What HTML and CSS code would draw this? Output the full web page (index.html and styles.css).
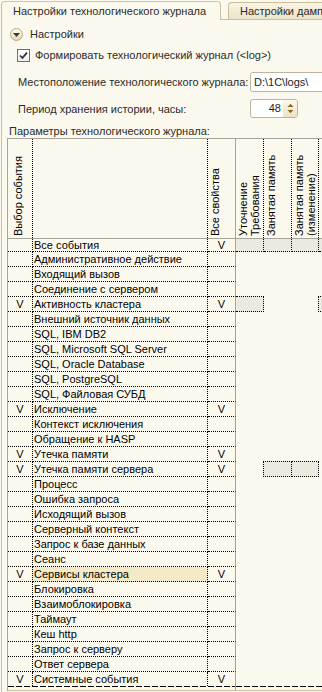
FILE: index.html
```html
<!DOCTYPE html>
<html lang="ru">
<head>
<meta charset="utf-8">
<title>Настройки технологического журнала</title>
<link rel="stylesheet" href="styles.css">
</head>
<body>
<div class="screen">
  <div class="tabs">
    <div class="tab tab-active">Настройки технологического журнала</div>
    <div class="tab tab-other">Настройки дампов</div>
  </div>
  <div class="panel">
    <div class="group-head">
      <span class="toggle"><svg width="7" height="4" viewBox="0 0 7 4"><path d="M0 0 L7 0 L3.5 4 Z" fill="#3a3a3a"/></svg></span>
      <span>Настройки</span>
    </div>
    <div class="check-row">
      <span class="checkbox"><svg width="11" height="11" viewBox="0 0 11 11"><path d="M2 5.5 L4.4 8 L9 2.6" fill="none" stroke="#2f2f2f" stroke-width="1.7"/></svg></span>
      <span>Формировать технологический журнал (&lt;log&gt;)</span>
    </div>
    <div class="field-row">
      <span class="field-label">Местоположение технологического журнала:</span>
      <div class="input">D:\1C\logs\</div>
    </div>
    <div class="field-row field-row-spin">
      <span class="field-label">Период хранения истории, часы:</span>
      <div class="spin">
        <span class="spin-val">48</span>
        <span class="spin-btn"><svg width="9" height="17" viewBox="0 0 9 17"><path d="M1.5 7 L4.5 3.8 L7.5 7 Z" fill="#8d6a22"/><path d="M1.5 10 L4.5 13.2 L7.5 10 Z" fill="#8d6a22"/></svg></span>
      </div>
    </div>
    <div class="caption">Параметры технологического журнала:</div>
    <div class="grid">
      <div class="head">
        <div class="hc hc-sel"><div class="vt">Выбор события</div></div>
        <div class="hc hc-name"></div>
        <div class="hc hc-all"><div class="vt">Все свойства</div></div>
        <div class="hc hc-dot"><div class="vt">Уточнение<br>Требования</div></div>
        <div class="hc hc-dot"><div class="vt">Занятая память</div></div>
        <div class="hc hc-dot"><div class="vt">Занятая память<br>(изменение)</div></div>
        <div class="hc"></div>
      </div>
      <div class="row first"><div class="cell sel"></div><div class="cell name">Все события</div><div class="cell all">V</div><div class="f c4"></div><div class="f c5"></div><div class="f c6"></div><div class="f c7"></div></div>
      <div class="row"><div class="cell sel"></div><div class="cell name">Административное действие</div><div class="cell all"></div></div>
      <div class="row"><div class="cell sel"></div><div class="cell name">Входящий вызов</div><div class="cell all"></div></div>
      <div class="row"><div class="cell sel"></div><div class="cell name">Соединение с сервером</div><div class="cell all"></div></div>
      <div class="row"><div class="cell sel">V</div><div class="cell name">Активность кластера</div><div class="cell all">V</div><div class="f ft c4"></div><div class="f ft fl c7"></div></div>
      <div class="row"><div class="cell sel"></div><div class="cell name">Внешний источник данных</div><div class="cell all"></div></div>
      <div class="row"><div class="cell sel"></div><div class="cell name">SQL, IBM DB2</div><div class="cell all"></div></div>
      <div class="row"><div class="cell sel"></div><div class="cell name">SQL, Microsoft SQL Server</div><div class="cell all"></div></div>
      <div class="row"><div class="cell sel"></div><div class="cell name">SQL, Oracle Database</div><div class="cell all"></div></div>
      <div class="row"><div class="cell sel"></div><div class="cell name">SQL, PostgreSQL</div><div class="cell all"></div></div>
      <div class="row"><div class="cell sel"></div><div class="cell name">SQL, Файловая СУБД</div><div class="cell all"></div></div>
      <div class="row"><div class="cell sel">V</div><div class="cell name">Исключение</div><div class="cell all">V</div></div>
      <div class="row"><div class="cell sel"></div><div class="cell name">Контекст исключения</div><div class="cell all"></div></div>
      <div class="row"><div class="cell sel"></div><div class="cell name">Обращение к HASP</div><div class="cell all"></div></div>
      <div class="row"><div class="cell sel">V</div><div class="cell name">Утечка памяти</div><div class="cell all">V</div></div>
      <div class="row"><div class="cell sel">V</div><div class="cell name">Утечка памяти сервера</div><div class="cell all">V</div><div class="f ft fl c5"></div><div class="f ft c6"></div></div>
      <div class="row"><div class="cell sel"></div><div class="cell name">Процесс</div><div class="cell all"></div></div>
      <div class="row"><div class="cell sel"></div><div class="cell name">Ошибка запроса</div><div class="cell all"></div></div>
      <div class="row"><div class="cell sel"></div><div class="cell name">Исходящий вызов</div><div class="cell all"></div></div>
      <div class="row"><div class="cell sel"></div><div class="cell name">Серверный контекст</div><div class="cell all"></div></div>
      <div class="row"><div class="cell sel"></div><div class="cell name">Запрос к базе данных</div><div class="cell all"></div></div>
      <div class="row"><div class="cell sel"></div><div class="cell name">Сеанс</div><div class="cell all"></div></div>
      <div class="row"><div class="cell sel">V</div><div class="cell name current">Сервисы кластера</div><div class="cell all">V</div></div>
      <div class="row"><div class="cell sel"></div><div class="cell name">Блокировка</div><div class="cell all"></div></div>
      <div class="row"><div class="cell sel"></div><div class="cell name">Взаимоблокировка</div><div class="cell all"></div></div>
      <div class="row"><div class="cell sel"></div><div class="cell name">Таймаут</div><div class="cell all"></div></div>
      <div class="row"><div class="cell sel"></div><div class="cell name">Кеш http</div><div class="cell all"></div></div>
      <div class="row"><div class="cell sel"></div><div class="cell name">Запрос к серверу</div><div class="cell all"></div></div>
      <div class="row"><div class="cell sel"></div><div class="cell name">Ответ сервера</div><div class="cell all"></div></div>
      <div class="row last"><div class="cell sel">V</div><div class="cell name">Системные события</div><div class="cell all">V</div></div>
      <div class="foot"><div class="foot-a"></div><div class="foot-b"></div></div>
    </div>
  </div>
</div>
</body>
</html>
```
FILE: styles.css
```css
html, body {
  margin: 0;
  padding: 0;
}
body {
  width: 322px;
  height: 692px;
  overflow: hidden;
  background: #fbf9ee;
  font-family: "Liberation Sans", Arial, sans-serif;
  font-size: 11px;
  color: #2b2b2b;
}
.screen {
  width: 322px;
  height: 692px;
  overflow: hidden;
}

/* tabs */
.tabs {
  display: flex;
  align-items: flex-end;
  height: 19px;
  padding-left: 1px;
}
.tab {
  box-sizing: border-box;
  white-space: nowrap;
  overflow: hidden;
  line-height: 14px;
  flex: none;
}
.tab-active {
  width: 220px;
  height: 19px;
  margin-bottom: -1px;
  position: relative;
  z-index: 1;
  border: 1px solid #cdbf9a;
  border-top-color: #e8c27c;
  border-bottom: none;
  border-radius: 4px 4px 0 0;
  background: #fbf9ee;
  padding: 2px 0 0 11px;
}
.tab-other {
  width: 120px;
  height: 17px;
  margin-left: 7px;
  border: 1px solid #c9bd9a;
  border-bottom: none;
  border-radius: 4px 4px 0 0;
  background: linear-gradient(#f8f4e5, #ebe4cb);
  padding: 1px 0 0 11px;
}

/* panel */
.panel {
  margin-left: 1px;
  border-top: 1px solid #cdbf9a;
  border-left: 1px solid #cdbf9a;
  height: 700px;
}
.group-head {
  display: flex;
  align-items: center;
  gap: 7px;
  height: 13px;
  line-height: 13px;
  margin-top: 8px;
  padding-left: 8px;
}
.toggle {
  box-sizing: border-box;
  width: 13px;
  height: 13px;
  border-radius: 50%;
  border: 1px solid #b8aa86;
  background: linear-gradient(#fdfbf2, #e2d7b4);
  display: flex;
  align-items: center;
  justify-content: center;
}
.toggle svg {
  display: block;
  margin-top: 1px;
}
.check-row {
  display: flex;
  align-items: center;
  gap: 5px;
  height: 13px;
  line-height: 13px;
  margin-top: 8px;
  padding-left: 15px;
}
.checkbox {
  box-sizing: border-box;
  width: 13px;
  height: 13px;
  border: 1px solid #6f6f6f;
  background: linear-gradient(#ffffff, #eeeeee);
  display: flex;
  align-items: center;
  justify-content: center;
}
.checkbox svg {
  display: block;
}
.field-row {
  display: flex;
  align-items: center;
  height: 20px;
  margin-top: 10px;
  padding-left: 16px;
  white-space: nowrap;
}
.field-row-spin {
  height: 19px;
  margin-top: 7px;
}
.field-label {
  width: 232px;
  flex: none;
}
.input {
  box-sizing: border-box;
  flex: none;
  width: 90px;
  height: 20px;
  line-height: 18px;
  border: 1px solid #bdb59c;
  border-radius: 3px;
  background: #ffffff;
  padding-left: 3px;
  color: #1e1e1e;
}
.spin {
  box-sizing: border-box;
  flex: none;
  width: 48px;
  height: 19px;
  border: 1px solid #bdb59c;
  border-radius: 3px;
  background: #ffffff;
  display: flex;
}
.spin-val {
  flex: 1;
  text-align: right;
  line-height: 17px;
  padding-right: 2px;
  color: #1e1e1e;
}
.spin-btn {
  width: 14px;
  background: linear-gradient(#fbf8ee, #ebe3c8);
  border-radius: 0 2px 2px 0;
  display: flex;
  justify-content: center;
}
.spin-btn svg {
  display: block;
}
.caption {
  margin-top: 6px;
  height: 14px;
  line-height: 14px;
  padding-left: 7px;
}

/* grid table */
.grid {
  margin-left: 5px;
  width: 400px;
  border-top: 1px solid #a7a59b;
  border-left: 1px solid #a7a59b;
  color: #000;
}
.head,
.row,
.foot {
  display: grid;
  grid-template-columns: 25px 175px 28px 28px 28px 27px 30px;
}
.head {
  box-sizing: border-box;
  height: 100px;
  border-bottom: 1px solid #a7a59b;
}
.hc {
  display: flex;
  overflow: hidden;
}
.hc-sel,
.hc-name,
.hc-dot {
  border-right: 1px dotted #000;
}
.hc-all {
  border-right: 1px solid #a7a59b;
}
.vt {
  writing-mode: vertical-rl;
  transform: rotate(180deg);
  white-space: nowrap;
  line-height: 12px;
  padding-top: 2px;
  margin-left: 1px;
}
.hc-sel .vt {
  margin-left: 4px;
}
.row {
  height: 15px;
}
.row.first {
  height: 13px;
}
.row.last {
  height: 14px;
}
.cell {
  box-sizing: border-box;
  border-bottom: 1px dotted #000;
  line-height: 14px;
  white-space: nowrap;
  overflow: hidden;
}
.row.first .cell {
  line-height: 12px;
}
.row.last .cell {
  border-bottom: none;
}
.sel {
  border-right: 1px dotted #000;
  text-align: center;
}
.name {
  border-right: 1px dotted #000;
  padding-left: 1px;
}
.name.current {
  background: #f5eac6;
}
.all {
  border-right: 1px solid #a7a59b;
  text-align: center;
}
.f {
  background: #eceadf;
  border-right: 1px dotted #000;
  border-bottom: 1px dotted #000;
}
.ft {
  margin-top: -1px;
  border-top: 1px dotted #000;
}
.fl {
  margin-left: -1px;
  border-left: 1px dotted #000;
}
.c4 { grid-column: 4; }
.c5 { grid-column: 5; }
.c6 { grid-column: 6; }
.c7 { grid-column: 7; }
.foot {
  height: 5px;
}
.foot-a,
.foot-b {
  box-sizing: border-box;
  border-bottom: 1px solid #cdbf9a;
  background: repeating-linear-gradient(to right, #000 0 6px, transparent 6px 8px) top left / 100% 1px no-repeat;
}
.foot-a {
  grid-column: 1 / 4;
  border-right: 1px solid #a7a59b;
}
.foot-b {
  grid-column: 4 / 8;
}
```
